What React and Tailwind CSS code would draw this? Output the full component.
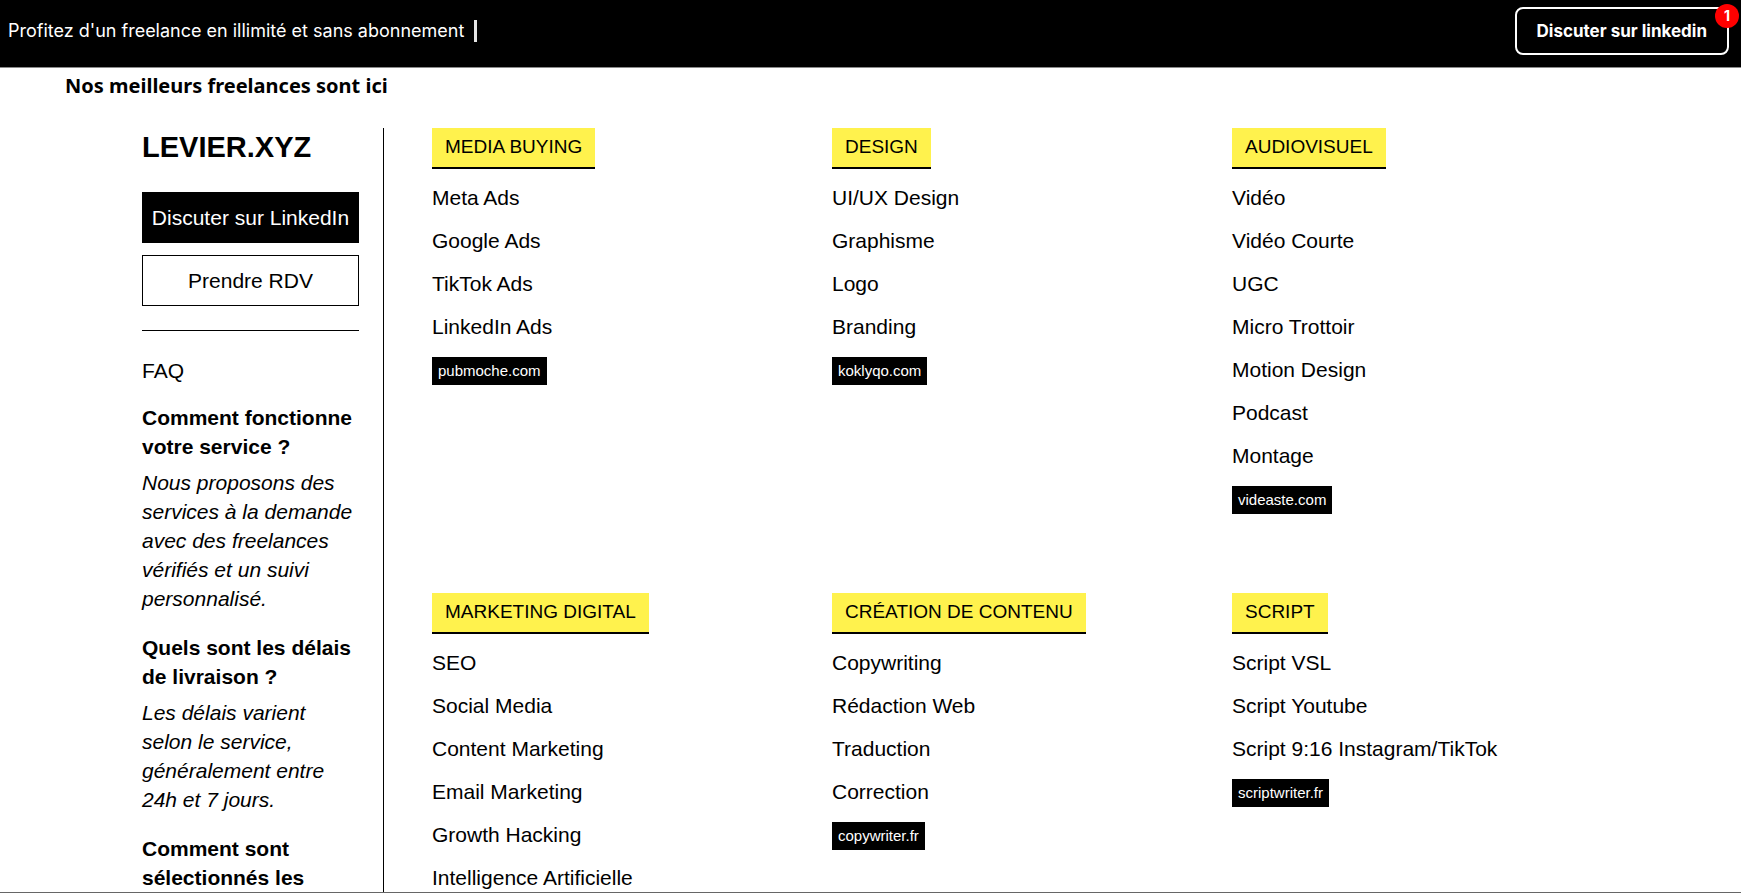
import React from "react";

const services = [
    {
        title: "MEDIA BUYING",
        items: ["Meta Ads", "Google Ads", "TikTok Ads", "LinkedIn Ads"],
        site: "pubmoche.com",
    },
    {
        title: "DESIGN",
        items: ["UI/UX Design", "Graphisme", "Logo", "Branding"],
        site: "koklyqo.com",
    },
    {
        title: "AUDIOVISUEL",
        items: ["Vidéo", "Vidéo Courte", "UGC", "Micro Trottoir", "Motion Design", "Podcast", "Montage"],
        site: "videaste.com",
    },
    {
        title: "MARKETING DIGITAL",
        items: ["SEO", "Social Media", "Content Marketing", "Email Marketing", "Growth Hacking", "Intelligence Artificielle"],
    },
    {
        title: "CRÉATION DE CONTENU",
        items: ["Copywriting", "Rédaction Web", "Traduction", "Correction"],
        site: "copywriter.fr",
    },
    {
        title: "SCRIPT",
        items: ["Script VSL", "Script Youtube", "Script 9:16 Instagram/TikTok"],
        site: "scriptwriter.fr",
    },
];

const faq = [
    {
        question: "Comment fonctionne votre service ?",
        answer: "Nous proposons des services à la demande avec des freelances vérifiés et un suivi personnalisé.",
    },
    {
        question: "Quels sont les délais de livraison ?",
        answer: "Les délais varient selon le service, généralement entre 24h et 7 jours.",
    },
    {
        question: "Comment sont sélectionnés les",
    },
];

const Header = () => {
    return (
        <header className="flex shrink-0 items-center justify-between border-b border-[#8a8a8a] bg-black pt-[7px] pr-3 pb-3 pl-2 font-['Inter',sans-serif] text-white">
            <p className="flex items-center gap-[10px] text-[18px] leading-6">
                Profitez d'un freelance en illimité et sans abonnement
                <span className="h-[22px] w-[3px] bg-[#e5e5e5]"></span>
            </p>
            <button type="button" className="relative h-12 rounded-lg border-2 border-white px-5 text-[17px] leading-6 font-bold">
                Discuter sur linkedin
                <span className="absolute -top-[5px] -right-3 flex size-6 items-center justify-center rounded-full bg-[#ff0000] text-[14px]">1</span>
            </button>
        </header>
    );
};

const Sidebar = () => {
    return (
        <aside className="w-[242px] shrink-0 border-r border-black pr-6">
            <h2 className="text-[29px] leading-[38px] font-bold">LEVIER.XYZ</h2>

            <div className="mt-[26px] flex flex-col gap-3 border-b border-black pb-6">
                <button type="button" className="h-[51px] border border-black bg-black text-white">Discuter sur LinkedIn</button>
                <button type="button" className="h-[51px] border border-black bg-white">Prendre RDV</button>
            </div>

            <h3 className="mt-[25px]">FAQ</h3>
            <div className="mt-[18px] flex flex-col gap-5">
                {faq.map((item) => (
                    <div key={item.question} className="flex flex-col gap-[7px]">
                        <h4 className="font-bold">{item.question}</h4>
                        {item.answer && <p className="italic">{item.answer}</p>}
                    </div>
                ))}
            </div>
        </aside>
    );
};

const ServiceCard = ({ title, items, site }) => {
    return (
        <section className="flex flex-col items-start">
            <h3 className="h-[41px] border-b-2 border-black bg-[#fff24d] px-[13px] text-[19px] leading-[38px]">{title}</h3>
            <ul className="mt-[14px] flex flex-col gap-[14px]">
                {items.map((item) => (
                    <li key={item}>{item}</li>
                ))}
            </ul>
            {site && <a href={`https://${site}`} className="mt-4 bg-black px-[6px] text-[15px] leading-7 text-white">{site}</a>}
        </section>
    );
};

const App = () => {
    return (
        <div className="flex h-screen flex-col overflow-hidden border-b border-[#666666] bg-white font-['Liberation_Sans',Arial,sans-serif] text-black">
            <Header />
            <h1 className="mt-[2px] shrink-0 px-[65px] font-['Noto_Sans',sans-serif] text-[20px] leading-8 font-bold">Nos meilleurs freelances sont ici</h1>

            <main className="mx-auto mt-[26px] flex min-h-0 w-full max-w-[1457px] grow gap-12 text-[21px] leading-[29px]">
                <Sidebar />
                <div className="grid grow grid-cols-3 content-start gap-x-[33px] gap-y-[79px]">
                    {services.map((service) => (
                        <ServiceCard key={service.title} {...service} />
                    ))}
                </div>
            </main>
        </div>
    );
};

export default App;
